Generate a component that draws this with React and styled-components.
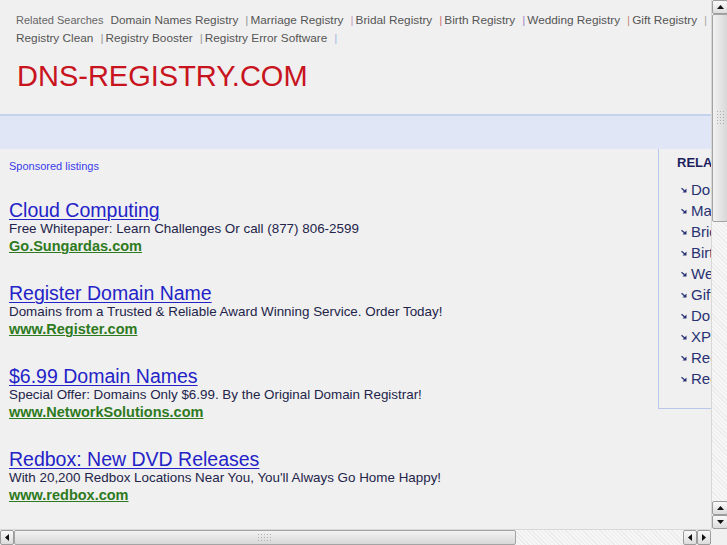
import styled, { createGlobalStyle } from 'styled-components';

const GlobalStyle = createGlobalStyle`
  html, body {
    margin: 0;
    padding: 0;
    background: #f0f0f0;
    overflow: hidden;
  }
  body {
    font-family: "Liberation Sans", Arial, sans-serif;
  }
`;

const Frame = styled.div`
  width: 727px;
  height: 545px;
  display: grid;
  grid-template-columns: 711px 16px;
  grid-template-rows: 529px 16px;
  background: #f0f0f0;
  overflow: hidden;
`;

const Viewport = styled.div`
  overflow: hidden;
`;

const Page = styled.div`
  width: 990px;
`;

const Header = styled.div`
  padding: 11px 0 0 16px;
  width: 730px;
`;

const Related = styled.div`
  font-size: 11.8px;
  line-height: 18px;
  color: #555;
`;

const RelatedLabel = styled.span`
  font-size: 11px;
  color: #666;
  margin-right: 7px;
`;

const RelatedEntry = styled.span`
  display: inline-block;
  white-space: nowrap;
`;

const RelatedItem = styled.a`
  color: #555;
  text-decoration: none;
`;

const Sep = styled.span`
  color: ${p => p.$c || '#aaa'};
  margin: 0 2px 0 7px;
`;

const Logo = styled.div`
  font-size: 29px;
  line-height: 36px;
  color: #c8141e;
  margin: 11px 0 0 1px;
  height: 54px;
`;

const Band = styled.div`
  margin-top: 2px;
  border-top: 2px solid #c4d2ee;
  height: 33px;
  background: #e0e6f5;
`;

const Body = styled.div`
  display: flex;
  align-items: flex-start;
`;

const Main = styled.div`
  width: 649px;
  padding: 10px 0 0 9px;
`;

const Sponsored = styled.div`
  font-size: 11px;
  line-height: 14px;
  color: #3b3bea;
  margin-bottom: 27px;
`;

const Ad = styled.div`
  margin-bottom: 28px;
`;

const AdTitle = styled.a`
  display: block;
  font-size: 19.5px;
  line-height: 20px;
  color: #2323c8;
  text-decoration: underline;
  text-decoration-thickness: 1px;
  text-underline-offset: 2px;
`;

const AdText = styled.div`
  font-size: 13.4px;
  line-height: 18px;
  color: #23244a;
`;

const AdUrl = styled.a`
  display: block;
  font-size: 14.5px;
  line-height: 17px;
  font-weight: bold;
  color: #2e7a21;
  text-decoration: underline;
  text-decoration-thickness: 1px;
`;

const Sidebar = styled.div`
  width: 300px;
  border-left: 1px solid #b9c8ea;
  border-bottom: 1px solid #b9c8ea;
  padding: 6px 0 19px 18px;
`;

const SideTitle = styled.div`
  font-size: 13px;
  line-height: 16px;
  font-weight: bold;
  color: #1c1f5e;
  margin-bottom: 8px;
`;

const SideList = styled.ul`
  list-style: none;
  margin: 0;
  padding: 0 0 0 4px;
`;

const SideItem = styled.li`
  display: flex;
  align-items: center;
  gap: 4px;
  font-size: 15px;
  line-height: 21px;
  color: #283272;
  white-space: nowrap;
`;

const VBar = styled.div`
  display: flex;
  flex-direction: column;
  background: repeating-linear-gradient(45deg, #f6f6f6 0 2px, #ececec 2px 3px);
  border-left: 1px solid #d8d8d8;
`;

const HBar = styled.div`
  display: flex;
  background: repeating-linear-gradient(45deg, #f6f6f6 0 2px, #ececec 2px 3px);
  border-top: 1px solid #d8d8d8;
`;

const Corner = styled.div`
  background: #f0f0f0;
`;

const Btn = styled.div`
  box-sizing: border-box;
  width: ${p => (p.$h ? '14px' : '16px')};
  height: ${p => (p.$h ? '15px' : '14px')};
  flex: none;
  display: flex;
  align-items: center;
  justify-content: center;
  background: linear-gradient(#fafafa, #dcdcdc);
  border: 1px solid #9c9c9c;
  border-radius: 2px;
`;

const Thumb = styled.div`
  box-sizing: border-box;
  flex: none;
  width: ${p => (p.$h ? `${p.$len}px` : '16px')};
  height: ${p => (p.$h ? '15px' : `${p.$len}px`)};
  background: ${p =>
    p.$h ? 'linear-gradient(#f2f2f2, #d8d8d8)' : 'linear-gradient(90deg, #f2f2f2, #d8d8d8)'};
  border: 1px solid #a4a4a4;
  border-radius: 2px;
  display: flex;
  align-items: center;
  justify-content: center;
`;

const Grip = styled.div`
  width: ${p => (p.$h ? '16px' : '9px')};
  height: ${p => (p.$h ? '9px' : '16px')};
  background-image: radial-gradient(#b0b0b0 0.8px, transparent 1px);
  background-size: 3px 3px;
`;

const Spacer = styled.div`
  flex: 1;
`;

const Arrow = ({ dir }) => {
  const pts = {
    up: '0,4 3.5,0 7,4',
    down: '0,0 3.5,4 7,0',
    left: '4,0 0,3.5 4,7',
    right: '0,0 4,3.5 0,7',
  }[dir];
  const vertical = dir === 'up' || dir === 'down';
  return (
    <svg width={vertical ? 7 : 4} height={vertical ? 4 : 7} viewBox={vertical ? '0 0 7 4' : '0 0 4 7'}>
      <polygon points={pts} fill="#111" />
    </svg>
  );
};

const Bullet = () => (
  <svg width="6" height="6" viewBox="0 0 6 6">
    <path d="M0.5 1.2 L4 4.2" stroke="#283272" strokeWidth="1.2" />
    <polygon points="5.5,1.5 5.5,5.5 1.5,5.5" fill="#283272" />
  </svg>
);

const related = [
  ['Domain Names Registry', '#999'],
  ['Marriage Registry', '#c9a0b8'],
  ['Bridal Registry', '#d07878'],
  ['Birth Registry', '#a58ac8'],
  ['Wedding Registry', '#c98a7a'],
  ['Gift Registry', '#aaa'],
  ['Registry Clean', '#999'],
  ['Registry Booster', '#999'],
  ['Registry Error Software', '#a9b8e0'],
];

const ads = [
  {
    title: 'Cloud Computing',
    text: 'Free Whitepaper: Learn Challenges Or call (877) 806-2599',
    url: 'Go.Sungardas.com',
  },
  {
    title: 'Register Domain Name',
    text: 'Domains from a Trusted & Reliable Award Winning Service. Order Today!',
    url: 'www.Register.com',
  },
  {
    title: '$6.99 Domain Names',
    text: 'Special Offer: Domains Only $6.99. By the Original Domain Registrar!',
    url: 'www.NetworkSolutions.com',
  },
  {
    title: 'Redbox: New DVD Releases',
    text: "With 20,200 Redbox Locations Near You, You'll Always Go Home Happy!",
    url: 'www.redbox.com',
  },
];

const sideLinks = [
  'Domain Names Registry',
  'Marriage Registry',
  'Bridal Registry',
  'Birth Registry',
  'Wedding Registry',
  'Gift Registry',
  'Domain Registry',
  'XP Registry',
  'Registry Clean',
  'Registry Booster',
];

export default function App() {
  return (
    <>
      <GlobalStyle />
      <Frame>
        <Viewport>
          <Page>
            <Header>
              <Related>
                <RelatedLabel>Related Searches</RelatedLabel>
                {related.map(([name, c]) => (
                  <RelatedEntry key={name}>
                    <RelatedItem href="#">{name}</RelatedItem>
                    <Sep $c={c}>|</Sep>
                  </RelatedEntry>
                ))}
              </Related>
              <Logo>DNS-REGISTRY.COM</Logo>
            </Header>
            <Band />
            <Body>
              <Main>
                <Sponsored>Sponsored listings</Sponsored>
                {ads.map(ad => (
                  <Ad key={ad.title}>
                    <AdTitle href="#">{ad.title}</AdTitle>
                    <AdText>{ad.text}</AdText>
                    <AdUrl href="#">{ad.url}</AdUrl>
                  </Ad>
                ))}
              </Main>
              <Sidebar>
                <SideTitle>RELATED SEARCHES</SideTitle>
                <SideList>
                  {sideLinks.map(l => (
                    <SideItem key={l}>
                      <Bullet />
                      {l}
                    </SideItem>
                  ))}
                </SideList>
              </Sidebar>
            </Body>
          </Page>
        </Viewport>
        <VBar>
          <Btn><Arrow dir="up" /></Btn>
          <Thumb $len={208}><Grip /></Thumb>
          <Spacer />
          <Btn><Arrow dir="up" /></Btn>
          <Btn><Arrow dir="down" /></Btn>
        </VBar>
        <HBar>
          <Btn $h><Arrow dir="left" /></Btn>
          <Thumb $h $len={502}><Grip $h /></Thumb>
          <Spacer />
          <Btn $h><Arrow dir="left" /></Btn>
          <Btn $h><Arrow dir="right" /></Btn>
        </HBar>
        <Corner />
      </Frame>
    </>
  );
}
